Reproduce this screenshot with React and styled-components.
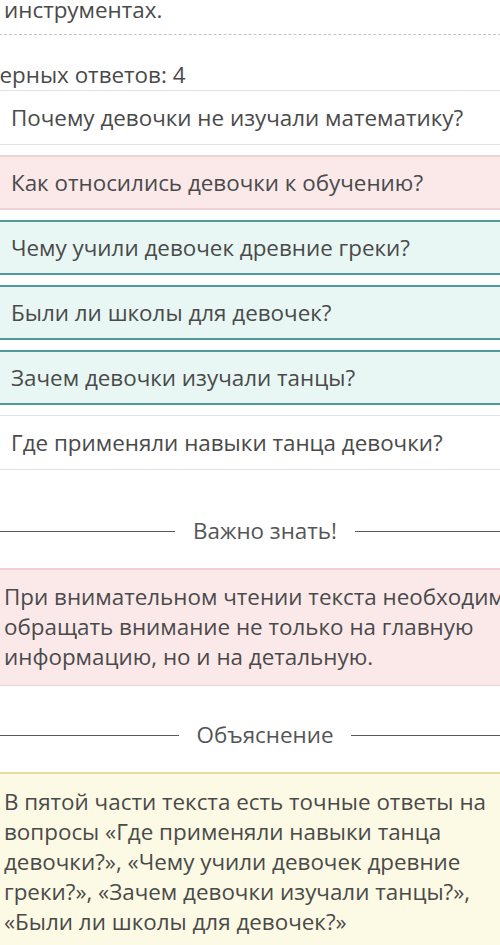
import React from "react";
import styled, { createGlobalStyle } from "styled-components";

const Global = createGlobalStyle`
  html, body { margin: 0; padding: 0; background: #ffffff; overflow: hidden; }
  body { width: 500px; height: 945px; font-family: "Open Sans", "Noto Sans", sans-serif; color: #4a4a4a; }
`;

const Page = styled.div`
  width: 562px;
  margin-left: -16px;
  display: flex;
  flex-direction: column;
  font-size: 22.4px;
  line-height: 30px;
`;

const Intro = styled.p`
  margin: -5px 0 0 20px;
`;

const Dashed = styled.hr`
  margin: 9px 0 0 0;
  border: none;
  border-top: 1px dashed #c4c4c4;
  height: 0;
`;

const Count = styled.div`
  margin-top: 25px;
  padding-left: 1px;
`;

const Rows = styled.div`
  display: flex;
  flex-direction: column;
  gap: 10px;
`;

const variants = {
  plain: { bg: "#ffffff", border: "1px solid #e2e2e2" },
  wrong: { bg: "#fbe9ea", border: "2px solid #f1d3d5" },
  right: { bg: "#e8f7f3", border: "2px solid #4f9996" },
};

const Row = styled.div`
  height: 55px;
  box-sizing: border-box;
  display: flex;
  align-items: center;
  padding-left: 27px;
  background: ${(p) => variants[p.$kind].bg};
  border-top: ${(p) => variants[p.$kind].border};
  border-bottom: ${(p) => variants[p.$kind].border};
`;

const Divider = styled.div`
  margin-top: ${(p) => p.$top}px;
  display: flex;
  align-items: center;
  gap: 18px;
  color: #555555;
  &::before, &::after {
    content: "";
    flex: 1;
    height: 1px;
    background: #5a5a5a;
  }
`;

const Note = styled.div`
  margin-top: ${(p) => p.$top}px;
  padding: ${(p) => p.$pad}px 0 13px 20px;
  background: ${(p) => p.$bg};
  border-top: 2px solid ${(p) => p.$line};
  border-bottom: 1px solid ${(p) => p.$line};
  white-space: pre-line;
`;

const questions = [
  ["plain", "Почему девочки не изучали математику?"],
  ["wrong", "Как относились девочки к обучению?"],
  ["right", "Чему учили девочек древние греки?"],
  ["right", "Были ли школы для девочек?"],
  ["right", "Зачем девочки изучали танцы?"],
  ["plain", "Где применяли навыки танца девочки?"],
];

export default function App() {
  return (
    <>
      <Global />
      <Page>
        <Intro>инструментах.</Intro>
        <Dashed />
        <Count>Верных ответов: 4</Count>
        <Rows>
          {questions.map(([k, t]) => (
            <Row key={t} $kind={k}>{t}</Row>
          ))}
        </Rows>
        <Divider $top={46}>Важно знать!</Divider>
        <Note $top={22} $pad={12} $bg="#fbe9ea" $line="#f2cfd2">
          {"При внимательном чтении текста необходимо\nобращать внимание не только на главную\nинформацию, но и на детальную."}
        </Note>
        <Divider $top={34}>Объяснение</Divider>
        <Note $top={22} $pad={13} $bg="#fcfae4" $line="#e6dc9f">
          {"В пятой части текста есть точные ответы на\nвопросы «Где применяли навыки танца\nдевочки?», «Чему учили девочек древние\nгреки?», «Зачем девочки изучали танцы?»,\n«Были ли школы для девочек?»"}
        </Note>
      </Page>
    </>
  );
}
